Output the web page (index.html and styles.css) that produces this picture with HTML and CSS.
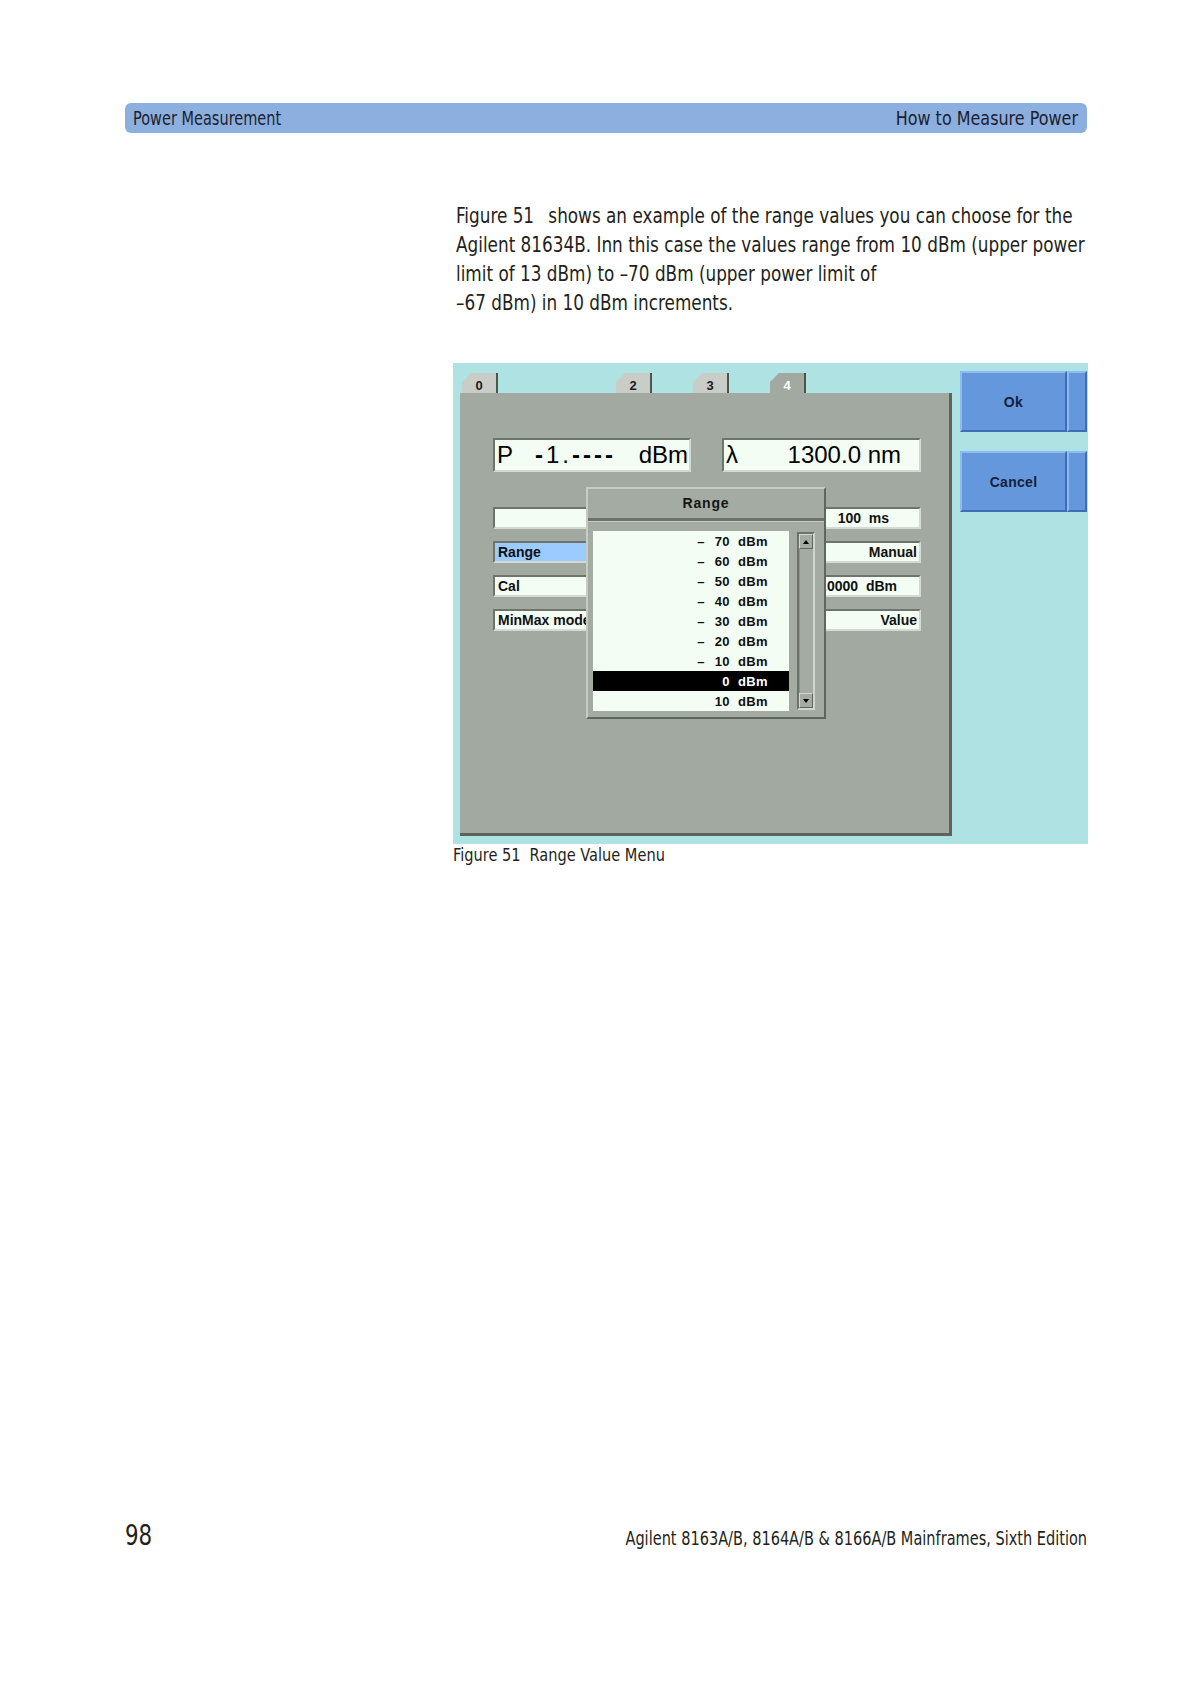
FILE: index.html
```html
<!DOCTYPE html>
<html lang="en">
<head>
<meta charset="utf-8">
<title>How to Measure Power</title>
<link rel="stylesheet" href="styles.css">
</head>
<body>
<div class="page">
  <header class="runhead">
    <span class="rh-left">Power Measurement</span>
    <span class="rh-right">How to Measure Power</span>
  </header>

  <main class="content">
    <p class="para"><span class="xref">Figure 51</span>shows an example of the range values you can choose for the<br>Agilent 81634B. Inn this case the values range from 10 dBm (upper power<br>limit of 13 dBm) to –70 dBm (upper power limit of<br>–67 dBm) in 10 dBm increments.</p>

    <figure class="fig">
      <div class="screen">
        <div class="left">
          <div class="tabs">
            <div class="tab">0</div>
            <div class="tab tab-empty"></div>
            <div class="tab">2</div>
            <div class="tab">3</div>
            <div class="tab tab-active">4</div>
          </div>
          <div class="panel">
            <div class="displays">
              <div class="dfield">
                <span class="d-label">P</span>
                <span class="d-val"><b class="d-dash">-</b>1.<b class="d-dash">----</b></span>
                <span class="d-unit">dBm</span>
              </div>
              <div class="dfield">
                <span class="d-label">λ</span>
                <span class="d-unit d-wl">1300.0 nm</span>
              </div>
            </div>
            <div class="rows">
              <div class="field"></div>
              <div class="field field-r pad-ms">100&nbsp; ms</div>
              <div class="field field-hl">Range</div>
              <div class="field field-r">Manual</div>
              <div class="field">Cal</div>
              <div class="field field-r pad-dbm">0.0000&nbsp; dBm</div>
              <div class="field">MinMax mode</div>
              <div class="field field-r">Value</div>
            </div>

            <div class="popup">
              <div class="popup-title">Range</div>
              <div class="popup-body">
                <div class="list">
                  <div class="row"><span class="sg">–</span><span class="nm">70</span><span class="un">dBm</span></div>
                  <div class="row"><span class="sg">–</span><span class="nm">60</span><span class="un">dBm</span></div>
                  <div class="row"><span class="sg">–</span><span class="nm">50</span><span class="un">dBm</span></div>
                  <div class="row"><span class="sg">–</span><span class="nm">40</span><span class="un">dBm</span></div>
                  <div class="row"><span class="sg">–</span><span class="nm">30</span><span class="un">dBm</span></div>
                  <div class="row"><span class="sg">–</span><span class="nm">20</span><span class="un">dBm</span></div>
                  <div class="row"><span class="sg">–</span><span class="nm">10</span><span class="un">dBm</span></div>
                  <div class="row row-sel"><span class="nm">0</span><span class="un">dBm</span></div>
                  <div class="row"><span class="nm">10</span><span class="un">dBm</span></div>
                </div>
                <div class="scroll">
                  <div class="sbtn"><span class="arr arr-up"></span></div>
                  <div class="track"></div>
                  <div class="sbtn"><span class="arr arr-down"></span></div>
                </div>
              </div>
            </div>
          </div>
        </div>
        <div class="buttons">
          <div class="btn"><div class="btn-main">Ok</div><div class="btn-side"></div></div>
          <div class="btn"><div class="btn-main">Cancel</div><div class="btn-side"></div></div>
        </div>
      </div>
      <figcaption class="caption"><span class="cap-num">Figure 51</span>Range Value Menu</figcaption>
    </figure>
  </main>

  <footer class="foot">
    <span class="pnum">98</span>
    <span class="ftitle">Agilent 8163A/B, 8164A/B &amp; 8166A/B Mainframes, Sixth Edition</span>
  </footer>
</div>
</body>
</html>
```

FILE: styles.css
```css
html, body {
  margin: 0;
  padding: 0;
  background: #ffffff;
}

.page {
  width: 1191px;
  height: 1684px;
  box-sizing: border-box;
  padding: 103px 0 132px 0;
  display: flex;
  flex-direction: column;
  font-family: "DejaVu Sans Condensed", "Liberation Sans Narrow", "Liberation Sans", sans-serif;
  color: #231f20;
}

/* running header */
.runhead {
  margin: 0 104px 0 125px;
  height: 30px;
  box-sizing: border-box;
  padding: 0 9px 0 8px;
  background: #8cafdf;
  border-radius: 6px;
  display: flex;
  justify-content: space-between;
  align-items: center;
  font-size: 19px;
  color: #1b1f2e;
  white-space: nowrap;
}

.rh-left,
.rh-right {
  display: inline-block;
}

.rh-left {
  transform: scaleX(0.85);
  transform-origin: 0 50%;
}

.rh-right {
  transform: scaleX(0.935);
  transform-origin: 100% 50%;
}

/* body text */
.content {
  margin-left: 453px;
  width: 635px;
}

.para {
  margin: 69px 0 0 3px;
  width: 710px;
  font-size: 21px;
  line-height: 29px;
  white-space: nowrap;
  transform: scaleX(0.892);
  transform-origin: 0 0;
}

.xref {
  margin-right: 16px;
}

/* figure */
.fig {
  margin: 45px 0 0 0;
}

.screen {
  width: 635px;
  height: 481px;
  box-sizing: border-box;
  background: #afe3e3;
  display: flex;
  padding-left: 7px;
  font-family: "Liberation Sans", Arial, sans-serif;
  color: #101010;
}

.left {
  width: 492px;
  padding-top: 10px;
  display: flex;
  flex-direction: column;
}

.tabs {
  display: flex;
  gap: 41px;
  height: 20px;
  padding-left: 2px;
}

.tab {
  width: 36px;
  height: 20px;
  box-sizing: border-box;
  background: #c9cdc8;
  border-right: 2px solid #4c544c;
  clip-path: polygon(9px 0, 100% 0, 100% 100%, 0 100%, 0 9px);
  font-size: 13px;
  font-weight: bold;
  line-height: 14px;
  padding-top: 6px;
  text-align: center;
  color: #1c1c1c;
}

.tab-empty {
  visibility: hidden;
}

.tab-active {
  background: #a2a9a0;
  color: #ffffff;
}

.panel {
  position: relative;
  height: 443px;
  box-sizing: border-box;
  background: #a2a9a0;
  border-right: 3px solid #5c645c;
  border-bottom: 3px solid #5c645c;
  padding: 45px 29px 0 33px;
}

.displays {
  display: grid;
  grid-template-columns: 198px 199px;
  column-gap: 31px;
  height: 34px;
}

.dfield,
.field {
  box-sizing: border-box;
  background: #f3fdf3;
  border-top: 2px solid #6c746c;
  border-left: 2px solid #6c746c;
  border-bottom: 2px solid #d3dad3;
  border-right: 2px solid #d3dad3;
}

.dfield {
  display: flex;
  align-items: center;
  font-size: 24px;
  color: #000;
  white-space: nowrap;
}

.d-label {
  padding-left: 2px;
}

.d-val {
  margin-left: 22px;
  letter-spacing: 3px;
}

.d-dash {
  font-weight: bold;
}

.d-unit {
  margin-left: auto;
  padding-right: 1px;
}

.d-wl {
  padding-right: 18px;
}

.rows {
  margin-top: 35px;
  display: grid;
  grid-template-columns: 198px 199px;
  grid-auto-rows: 22px;
  column-gap: 31px;
  row-gap: 12px;
}

.field {
  font-size: 14px;
  font-weight: bold;
  line-height: 18px;
  padding: 0 2px 0 3px;
  white-space: nowrap;
  overflow: hidden;
  color: #101010;
}

.field-hl {
  background: #9ccbff;
}

.field-r {
  text-align: right;
}

.pad-ms {
  padding-right: 30px;
}

.pad-dbm {
  padding-right: 22px;
}

/* range popup */
.popup {
  position: absolute;
  left: 126px;
  top: 94px;
  width: 240px;
  height: 232px;
  box-sizing: border-box;
  background: #a4aba2;
  border: 2px solid;
  border-color: #c6ccc4 #5e665e #5e665e #c6ccc4;
  display: flex;
  flex-direction: column;
}

.popup-title {
  height: 29px;
  border-bottom: 3px solid #6a726a;
  box-shadow: 0 1px 0 #c6ccc4;
  text-align: center;
  font-size: 14px;
  font-weight: bold;
  line-height: 29px;
  letter-spacing: 0.8px;
  color: #161616;
}

.popup-body {
  display: flex;
  gap: 8px;
  padding: 10px 9px 6px 5px;
}

.list {
  width: 196px;
  height: 180px;
  background: #f3fdf3;
}

.row {
  height: 20px;
  display: flex;
  justify-content: flex-end;
  align-items: center;
  padding-right: 21px;
  font-size: 13px;
  font-weight: bold;
  letter-spacing: 0.4px;
  color: #101010;
}

.row-sel {
  background: #000000;
  color: #ffffff;
}

.sg {
  margin-right: 6px;
}

.nm {
  min-width: 19px;
  text-align: right;
}

.un {
  margin-left: 8px;
}

.scroll {
  width: 18px;
  height: 178px;
  margin-top: 1px;
  box-sizing: border-box;
  border: 2px solid;
  border-color: #6a726a #d0d6ce #d0d6ce #6a726a;
  display: flex;
  flex-direction: column;
  background: #a4aba2;
}

.sbtn {
  height: 15px;
  box-sizing: border-box;
  border: 1px solid;
  border-color: #d4dad2 #5e665e #5e665e #d4dad2;
  display: flex;
  align-items: center;
  justify-content: center;
}

.track {
  flex: 1;
  border-left: 1px solid #8c948a;
}

.arr {
  width: 0;
  height: 0;
  border-left: 3px solid transparent;
  border-right: 3px solid transparent;
}

.arr-up {
  border-bottom: 4px solid #000;
}

.arr-down {
  border-top: 4px solid #000;
}

/* ok / cancel buttons */
.buttons {
  margin-left: 8px;
  padding-top: 8px;
  display: flex;
  flex-direction: column;
  gap: 19px;
}

.btn {
  width: 127px;
  height: 61px;
  display: flex;
}

.btn-main,
.btn-side {
  box-sizing: border-box;
  background: #6597dd;
  border: 2px solid;
  border-color: #8dbaf2 #3e6db5 #3e6db5 #8dbaf2;
}

.btn-main {
  width: 107px;
  display: flex;
  align-items: center;
  justify-content: center;
  font-size: 14px;
  font-weight: bold;
  letter-spacing: 0.3px;
  color: #14213a;
}

.btn-side {
  flex: 1;
}

.caption {
  margin-top: 0;
  font-size: 18px;
  line-height: 22px;
  white-space: nowrap;
  transform: scaleX(0.9);
  transform-origin: 0 0;
}

.cap-num {
  margin-right: 10px;
}

/* footer */
.foot {
  margin: auto 104px 0 125px;
  display: flex;
  justify-content: space-between;
  align-items: baseline;
  white-space: nowrap;
}

.pnum,
.ftitle {
  display: inline-block;
  transform: scaleX(0.85);
}

.pnum {
  font-size: 28px;
  line-height: 32px;
  transform-origin: 0 50%;
}

.ftitle {
  font-size: 19px;
  transform-origin: 100% 50%;
}
```
